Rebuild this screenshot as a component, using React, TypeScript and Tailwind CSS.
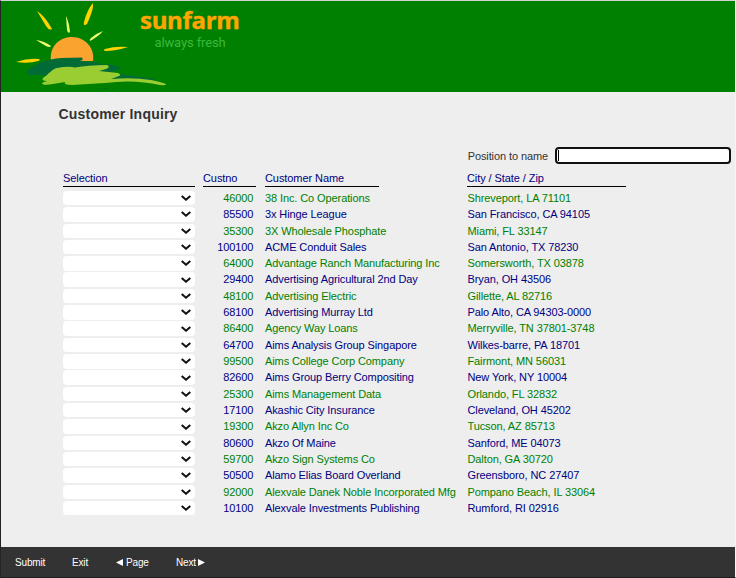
const customers: [string, string, string][] = [
  ['46000', '38 Inc. Co Operations', 'Shreveport, LA 71101'],
  ['85500', '3x Hinge League', 'San Francisco, CA 94105'],
  ['35300', '3X Wholesale Phosphate', 'Miami, FL 33147'],
  ['100100', 'ACME Conduit Sales', 'San Antonio, TX 78230'],
  ['64000', 'Advantage Ranch Manufacturing Inc', 'Somersworth, TX 03878'],
  ['29400', 'Advertising Agricultural 2nd Day', 'Bryan, OH 43506'],
  ['48100', 'Advertising Electric', 'Gillette, AL 82716'],
  ['68100', 'Advertising Murray Ltd', 'Palo Alto, CA 94303-0000'],
  ['86400', 'Agency Way Loans', 'Merryville, TN 37801-3748'],
  ['64700', 'Aims Analysis Group Singapore', 'Wilkes-barre, PA 18701'],
  ['99500', 'Aims College Corp Company', 'Fairmont, MN 56031'],
  ['82600', 'Aims Group Berry Compositing', 'New York, NY 10004'],
  ['25300', 'Aims Management Data', 'Orlando, FL 32832'],
  ['17100', 'Akashic City Insurance', 'Cleveland, OH 45202'],
  ['19300', 'Akzo Allyn Inc Co', 'Tucson, AZ 85713'],
  ['80600', 'Akzo Of Maine', 'Sanford, ME 04073'],
  ['59700', 'Akzo Sign Systems Co', 'Dalton, GA 30720'],
  ['50500', 'Alamo Elias Board Overland', 'Greensboro, NC 27407'],
  ['92000', 'Alexvale Danek Noble Incorporated Mfg', 'Pompano Beach, IL 33064'],
  ['10100', 'Alexvale Investments Publishing', 'Rumford, RI 02916'],
];

function Logo() {
  return (
    <svg width="180" height="91" viewBox="0 1 180 91" className="shrink-0">
      <path d="M51 61C49 47 59 37 72 37S95 48 93 61Z" fill="#faa32f" />
      <g fill="#ffd200">
        <path d="M37 11Q45 16 52 29Q49 31 46 26Z" />
        <path d="M93 3Q94 9 87 24Q83 27 84 22Q87 10 93 3Z" />
        <path d="M105 49Q115 46 128 47Q116 51 105 51Q103 50 105 49Z" />
        <path d="M16 62Q28 58 39 59Q41 60 38 61Q29 64 16 62Z" />
      </g>
      <g fill="#eeff6b">
        <path d="M66 16Q69 22 70 32Q68 34 67 30Z" />
        <path d="M103 31Q99 36 90 41Q89 40 91 38Q97 33 103 31Z" />
        <path d="M36 40Q44 41 51 46Q50 48 46 46Z" />
      </g>
      <path d="M27 71C34 64 48 59 61 58L82 57.5Q84 60 80 61L99 62.5Q104 63 97 64Q113 64 120 67Q122 69 117 70L108 73Q135 76 155 79L154 81L116 80L55 78C43 75 39 74 33 75Q26 76 27 71Z" fill="#006b36" />
      <path d="M43 78C49 74 52 69 57 68Q68 66 75 67.5Q88 65 107 65Q111 67 106 69L99 71L118 73Q122 75 119 76L111 79Q133 77 151 80Q161 82 166 84Q166 86 160 85Q134 79 105 83L72 85Q63 85 65 82L53 84Q42 86 42 83Q44 82 47 81Q41 81 43 78Z" fill="#9acd32" />
      <path d="M103 88.5h4M113 88.5h2" stroke="#006b20" strokeWidth="1" />
    </svg>
  );
}

export default function App() {
  return (
    <div className="flex h-[578px] w-[736px] flex-col overflow-hidden border-t border-r border-b border-l border-t-[#d2d2d2] border-r-[#f5f5f5] border-b-[#1e1e1e] border-l-[#242424] bg-[#eee] font-['Liberation_Sans',Arial,sans-serif] text-[11px] text-[#333]">
      <header className="-ml-px flex h-[91px] shrink-0 border-l border-[#242424] bg-[green]">
        <div className="-ml-px flex"><Logo /></div>
        <div className="-ml-10 w-[110px] pt-[5px]">
          <div className="h-7 whitespace-nowrap font-['Open_Sans',sans-serif] text-[24px] leading-7 font-bold tracking-[-0.3px] text-[orange] [-webkit-text-stroke:0.4px_orange]">sunfarm</div>
          <div className="pt-px pl-[14.5px] font-[Roboto,sans-serif] text-[13px] leading-4 tracking-[-0.13px] whitespace-nowrap text-[#3cb93c]">always fresh</div>
        </div>
      </header>
      <main className="flex min-h-0 flex-1 flex-col pl-[62px]">
        <h1 className="mt-[13px] -ml-[4.5px] h-[18px] text-[14px] leading-[18px] font-bold tracking-[0.2px]">Customer Inquiry</h1>
        <div className="mt-6 flex h-[17px] items-center justify-end pr-1">
          <label className="mr-[7px] pt-0.5 leading-[17px] tracking-[-0.1px]">Position to name</label>
          <div className="flex h-[17px] w-[176px] items-center rounded-[4px] border-2 border-[#101010] bg-white pl-px">
            <span className="h-[11px] w-px bg-black" />
            <input className="h-[13px] min-w-0 flex-1 text-[11px] outline-none" />
          </div>
        </div>
        <div className="mt-[7px] flex h-4 leading-[14px] tracking-[-0.08px] text-[navy]">
          <div className="mr-2 w-[132px] border-b border-black">Selection</div>
          <div className="mr-[9px] w-[53px] border-b border-black">Custno</div>
          <div className="mr-[88px] w-[114px] border-b border-black">Customer Name</div>
          <div className="w-[159px] border-b border-black">City / State / Zip</div>
        </div>
        <div className="mt-[3px]">
          {customers.map(([number, name, city], i) => (
            <div key={number} className={`flex h-[16.32px] items-center tracking-[-0.1px] whitespace-nowrap ${i % 2 ? 'text-[navy]' : 'text-[green]'}`}>
              <div className="ml-[0.4px] flex h-[14.5px] w-[131.5px] items-center justify-end rounded-[4px] bg-white pr-[4.4px]">
                <svg width="10" height="6" viewBox="0 0 10 6" fill="none" stroke="#111" strokeWidth="2"><path d="M.7.9 5 4.7 9.3.9" /></svg>
              </div>
              <div className="w-[58.5px] text-right">{number}</div>
              <div className="ml-[11.6px] w-[202.5px]">{name}</div>
              <div>{city}</div>
            </div>
          ))}
        </div>
      </main>
      <footer className="flex h-[30px] shrink-0 items-center bg-[#333] pl-[14px] text-[10px] tracking-[-0.15px] text-white">
        <span className="w-[57px]">Submit</span>
        <span className="w-11">Exit</span>
        <span className="flex w-[60px] items-center gap-[3px]"><svg width="7" height="7" viewBox="0 0 7 7" fill="currentColor"><path d="M7 0v7L0 3.5z" /></svg>Page</span>
        <span className="flex items-center gap-[2px]">Next<svg width="7" height="7" viewBox="0 0 7 7" fill="currentColor"><path d="M0 0v7l7-3.5z" /></svg></span>
      </footer>
    </div>
  );
}
